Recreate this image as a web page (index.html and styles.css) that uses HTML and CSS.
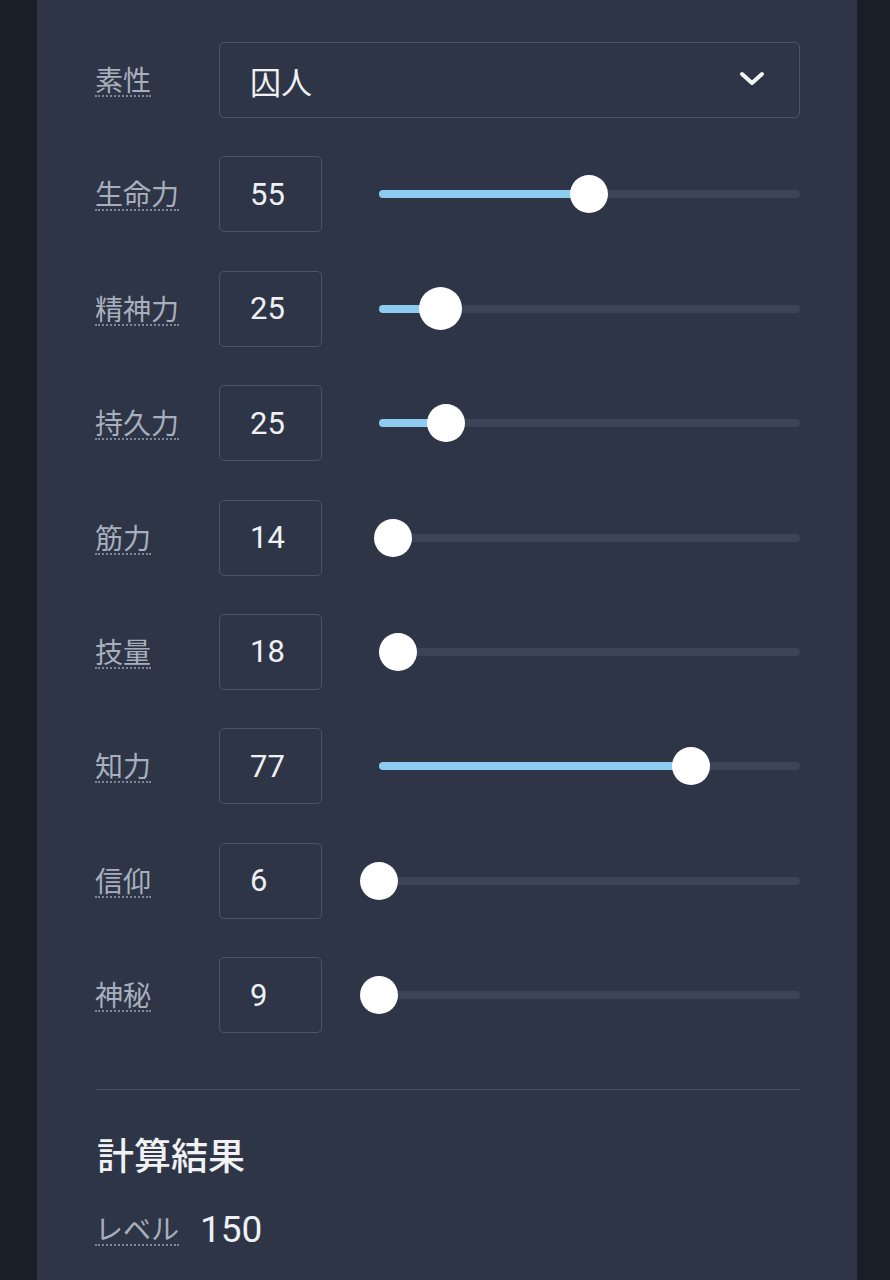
FILE: index.html
```html
<!DOCTYPE html>
<html lang="ja">
<head>
<meta charset="utf-8">
<link rel="stylesheet" href="styles.css">
</head>
<body>
<div class="page">
  <div class="form">
    <div class="row">
      <div class="label"><span class="abbr">素性</span></div>
      <div class="select">
        <span>囚人</span>
        <svg class="chev" width="26" height="16" viewBox="0 0 26 16"><path d="M3 3 L13 12 L23 3" fill="none" stroke="#f2f3f5" stroke-width="4" stroke-linecap="round" stroke-linejoin="round"/></svg>
      </div>
    </div>
    <div class="row">
      <div class="label"><span class="abbr">生命力</span></div>
      <div class="num">55</div>
      <div class="slider"><div class="track"><div class="fill" style="width:49.9%"></div></div><div class="thumb" style="left:49.9%"></div></div>
    </div>
    <div class="row">
      <div class="label"><span class="abbr">精神力</span></div>
      <div class="num">25</div>
      <div class="slider"><div class="track"><div class="fill" style="width:14.7%"></div></div><div class="thumb active" style="left:14.7%"></div></div>
    </div>
    <div class="row">
      <div class="label"><span class="abbr">持久力</span></div>
      <div class="num">25</div>
      <div class="slider"><div class="track"><div class="fill" style="width:15.9%"></div></div><div class="thumb" style="left:15.9%"></div></div>
    </div>
    <div class="row">
      <div class="label"><span class="abbr">筋力</span></div>
      <div class="num">14</div>
      <div class="slider"><div class="track"><div class="fill" style="width:3.3%"></div></div><div class="thumb" style="left:3.3%"></div></div>
    </div>
    <div class="row">
      <div class="label"><span class="abbr">技量</span></div>
      <div class="num">18</div>
      <div class="slider"><div class="track"><div class="fill" style="width:4.5%"></div></div><div class="thumb" style="left:4.5%"></div></div>
    </div>
    <div class="row">
      <div class="label"><span class="abbr">知力</span></div>
      <div class="num">77</div>
      <div class="slider"><div class="track"><div class="fill" style="width:74%"></div></div><div class="thumb" style="left:74%"></div></div>
    </div>
    <div class="row">
      <div class="label"><span class="abbr">信仰</span></div>
      <div class="num">6</div>
      <div class="slider"><div class="track"><div class="fill" style="width:0%"></div></div><div class="thumb" style="left:0%"></div></div>
    </div>
    <div class="row">
      <div class="label"><span class="abbr">神秘</span></div>
      <div class="num">9</div>
      <div class="slider"><div class="track"><div class="fill" style="width:0%"></div></div><div class="thumb" style="left:0%"></div></div>
    </div>
  </div>
  <hr class="divider">
  <h2 class="heading">計算結果</h2>
  <div class="result">
    <span class="abbr">レベル</span>
    <span class="level">150</span>
  </div>
</div>
</body>
</html>
```

FILE: styles.css
```css
html, body {
  margin: 0;
  padding: 0;
}
body {
  background: #191e29;
  font-family: Roboto, "Noto Sans CJK JP", sans-serif;
  color: #eceef1;
}
.page {
  box-sizing: border-box;
  margin-left: 37px;
  width: 820px;
  min-height: 1280px;
  background: #2d3546;
  padding: 42px 57px 0 58px;
}
.form {
  display: flex;
  flex-direction: column;
  gap: 38.4px;
}
.row {
  display: flex;
  align-items: center;
  height: 76px;
}
.label {
  width: 124px;
  flex: none;
  display: flex;
  align-items: center;
}
.abbr {
  display: inline-block;
  font-family: "Noto Sans CJK JP", sans-serif;
  font-size: 28px;
  line-height: 1;
  color: #a7afbd;
  border-bottom: 2px dotted #7e8797;
  padding-bottom: 2px;
  margin-top: 2px;
}
.select {
  flex: 1;
  box-sizing: border-box;
  height: 76px;
  border: 1.5px solid #4b5366;
  border-radius: 5px;
  padding: 0 34px 0 30px;
  display: flex;
  align-items: center;
  justify-content: space-between;
  font-family: "Noto Sans CJK JP", sans-serif;
  font-size: 31px;
  color: #eef0f3;
}
.chev {
  display: block;
  margin-top: -2px;
}
.num {
  flex: none;
  box-sizing: border-box;
  width: 103px;
  height: 76px;
  border: 1.5px solid #4b5366;
  border-radius: 5px;
  padding-left: 30px;
  display: flex;
  align-items: center;
  font-size: 31px;
  color: #eef0f3;
}
.slider {
  flex: 1;
  margin-left: 57px;
  position: relative;
  height: 44px;
  display: flex;
  align-items: center;
}
.track {
  position: relative;
  width: 100%;
  height: 8px;
  border-radius: 4px;
  background: #3c4456;
}
.fill {
  position: absolute;
  left: 0;
  top: 0;
  bottom: 0;
  border-radius: 4px;
  background: #8dcbf1;
}
.thumb {
  position: absolute;
  top: 50%;
  width: 38px;
  height: 38px;
  margin-left: -19px;
  margin-top: -19px;
  border-radius: 50%;
  background: #ffffff;
}
.thumb.active {
  width: 43px;
  height: 43px;
  margin-left: -21.5px;
  margin-top: -21.5px;
}
.divider {
  border: 0;
  border-top: 1.5px solid #454d5f;
  margin: 56px 0 0 0;
}
.heading {
  margin: 44px 0 0 2px;
  font-family: "Noto Sans CJK JP", sans-serif;
  font-size: 37px;
  font-weight: 500;
  line-height: 1.1;
  color: #f1f2f4;
}
.result {
  margin-top: 36px;
  display: flex;
  align-items: center;
  gap: 21px;
}
.level {
  font-size: 37px;
  line-height: 1;
  color: #eef0f3;
}
```
